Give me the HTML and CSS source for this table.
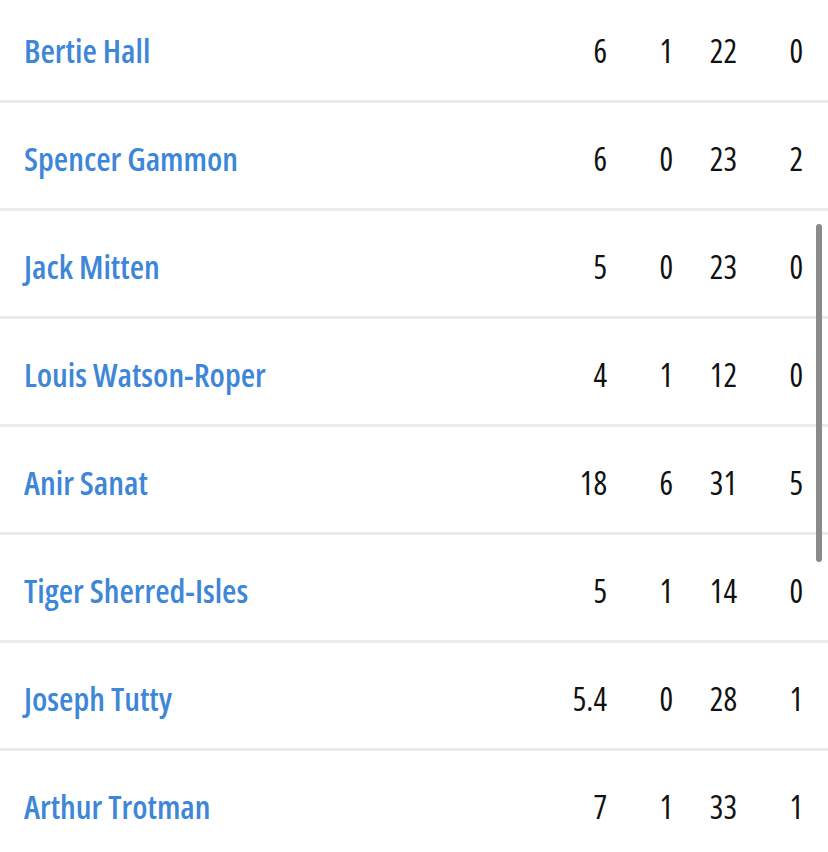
FILE: index.html
```html
<!DOCTYPE html>
<html>
<head>
<meta charset="utf-8">
<link rel="stylesheet" href="styles.css">
</head>
<body>
<div class="viewport">
  <ul class="list">
    <li class="row"><span class="name">Bertie Hall</span><span class="num">6</span><span class="num">1</span><span class="num">22</span><span class="num">0</span></li>
    <li class="row"><span class="name">Spencer Gammon</span><span class="num">6</span><span class="num">0</span><span class="num">23</span><span class="num">2</span></li>
    <li class="row"><span class="name">Jack Mitten</span><span class="num">5</span><span class="num">0</span><span class="num">23</span><span class="num">0</span></li>
    <li class="row"><span class="name">Louis Watson-Roper</span><span class="num">4</span><span class="num">1</span><span class="num">12</span><span class="num">0</span></li>
    <li class="row"><span class="name">Anir Sanat</span><span class="num">18</span><span class="num">6</span><span class="num">31</span><span class="num">5</span></li>
    <li class="row"><span class="name">Tiger Sherred-Isles</span><span class="num">5</span><span class="num">1</span><span class="num">14</span><span class="num">0</span></li>
    <li class="row"><span class="name">Joseph Tutty</span><span class="num">5.4</span><span class="num">0</span><span class="num">28</span><span class="num">1</span></li>
    <li class="row"><span class="name">Arthur Trotman</span><span class="num">7</span><span class="num">1</span><span class="num">33</span><span class="num">1</span></li>
  </ul>
  <div class="scrollbar"></div>
</div>
</body>
</html>
```

FILE: styles.css
```css
html, body {
  margin: 0;
  padding: 0;
  background: #ffffff;
}
.viewport {
  position: relative;
  width: 828px;
  height: 852px;
  overflow: hidden;
}
.list {
  list-style: none;
  margin: -5px 0 0 0;
  padding: 0;
}
.row {
  display: grid;
  grid-template-columns: 1fr 80px 66px 64px 66px;
  align-items: center;
  height: 105px;
  padding: 0 25px 0 24px;
  border-bottom: 3px solid #ebebeb;
}
.name {
  font-family: "Open Sans", "Liberation Sans", sans-serif;
  font-stretch: 75%;
  font-weight: 600;
  font-size: 33px;
  line-height: 40px;
  color: #3d86d8;
  padding-top: 6px;
}
.num {
  font-family: "Open Sans", "Liberation Sans", sans-serif;
  font-stretch: 80%;
  font-weight: 400;
  font-size: 32px;
  line-height: 40px;
  color: #111111;
  text-align: right;
  padding-top: 7px;
}
.scrollbar {
  position: absolute;
  left: 816px;
  top: 224px;
  width: 6px;
  height: 338px;
  border-radius: 3px;
  background: #8a8a8a;
}
```
